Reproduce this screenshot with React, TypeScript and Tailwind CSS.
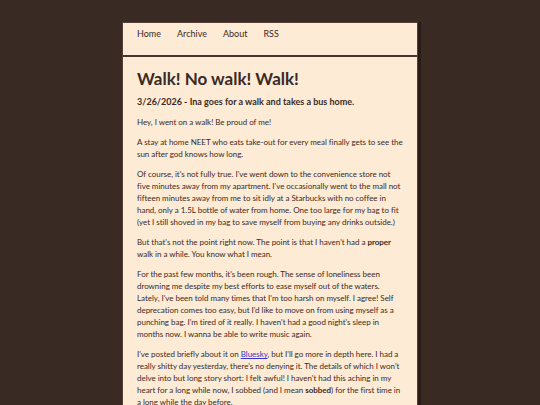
import React from 'react';

const navItems = ['Home', 'Archive', 'About', 'RSS'];

export default function App() {
  return (
    <div
      className="min-h-[405px] bg-[#3a2a24] pt-[22px] text-[#3b2a23]"
      style={{ fontFamily: 'Lato, "Open Sans", sans-serif' }}
    >
      <div className="mx-auto w-[296px] border border-[#5a3f36] bg-[#fdebd6] shadow-[3px_0_0_#281c18]">
        <nav className="flex gap-[16px] border-b-2 border-[#4a3530] px-[14px] pt-[5px] pb-[15px] text-[9px] leading-[12px]">
          {navItems.map((item) => (
            <a key={item} href="#" className="text-[#3b2a23]">
              {item}
            </a>
          ))}
        </nav>
        <main className="px-[14px] pt-[11px]">
          <h1 className="text-[17px] font-bold leading-[22px]">Walk! No walk! Walk!</h1>
          <h2 className="mt-[5px] text-[9px] font-bold leading-[14px]">
            3/26/2026 - Ina goes for a walk and takes a bus home.
          </h2>
          <div className="mt-[7px] space-y-[8px] text-[8px] leading-[12px] tracking-[-0.03px]">
            <p>Hey, I went on a walk! Be proud of me!</p>
            <p>
              A stay at home NEET who eats take-out for every meal finally gets to see the sun after god
              knows how long.
            </p>
            <p>
              Of course, it's not fully true. I've went down to the convenience store not five minutes away
              from my apartment. I've occasionally went to the mall not fifteen minutes away from me to sit
              idly at a Starbucks with no coffee in hand, only a 1.5L bottle of water from home. One too large
              for my bag to fit (yet I still shoved in my bag to save myself from buying any drinks outside.)
            </p>
            <p>
              But that's not the point right now. The point is that I haven't had a <b>proper</b> walk in a
              while. You know what I mean.
            </p>
            <p>
              For the past few months, it's been rough. The sense of loneliness been drowning me despite my
              best efforts to ease myself out of the waters. Lately, I've been told many times that I'm too
              harsh on myself. I agree! Self deprecation comes too easy, but I'd like to move on from using
              myself as a punching bag. I'm tired of it really. I haven't had a good night's sleep in months
              now. I wanna be able to write music again.
            </p>
            <p>
              I've posted briefly about it on{' '}
              <a href="#" className="text-[#3535d0] underline">
                Bluesky
              </a>
              , but I'll go more in depth here. I had a really shitty day yesterday, there's no denying it.
              The details of which I won't delve into but long story short: I felt awful! I haven't had this
              aching in my heart for a long while now, I sobbed (and I mean <b>sobbed</b>) for the first time
              in a long while the day before.
            </p>
          </div>
        </main>
      </div>
    </div>
  );
}
